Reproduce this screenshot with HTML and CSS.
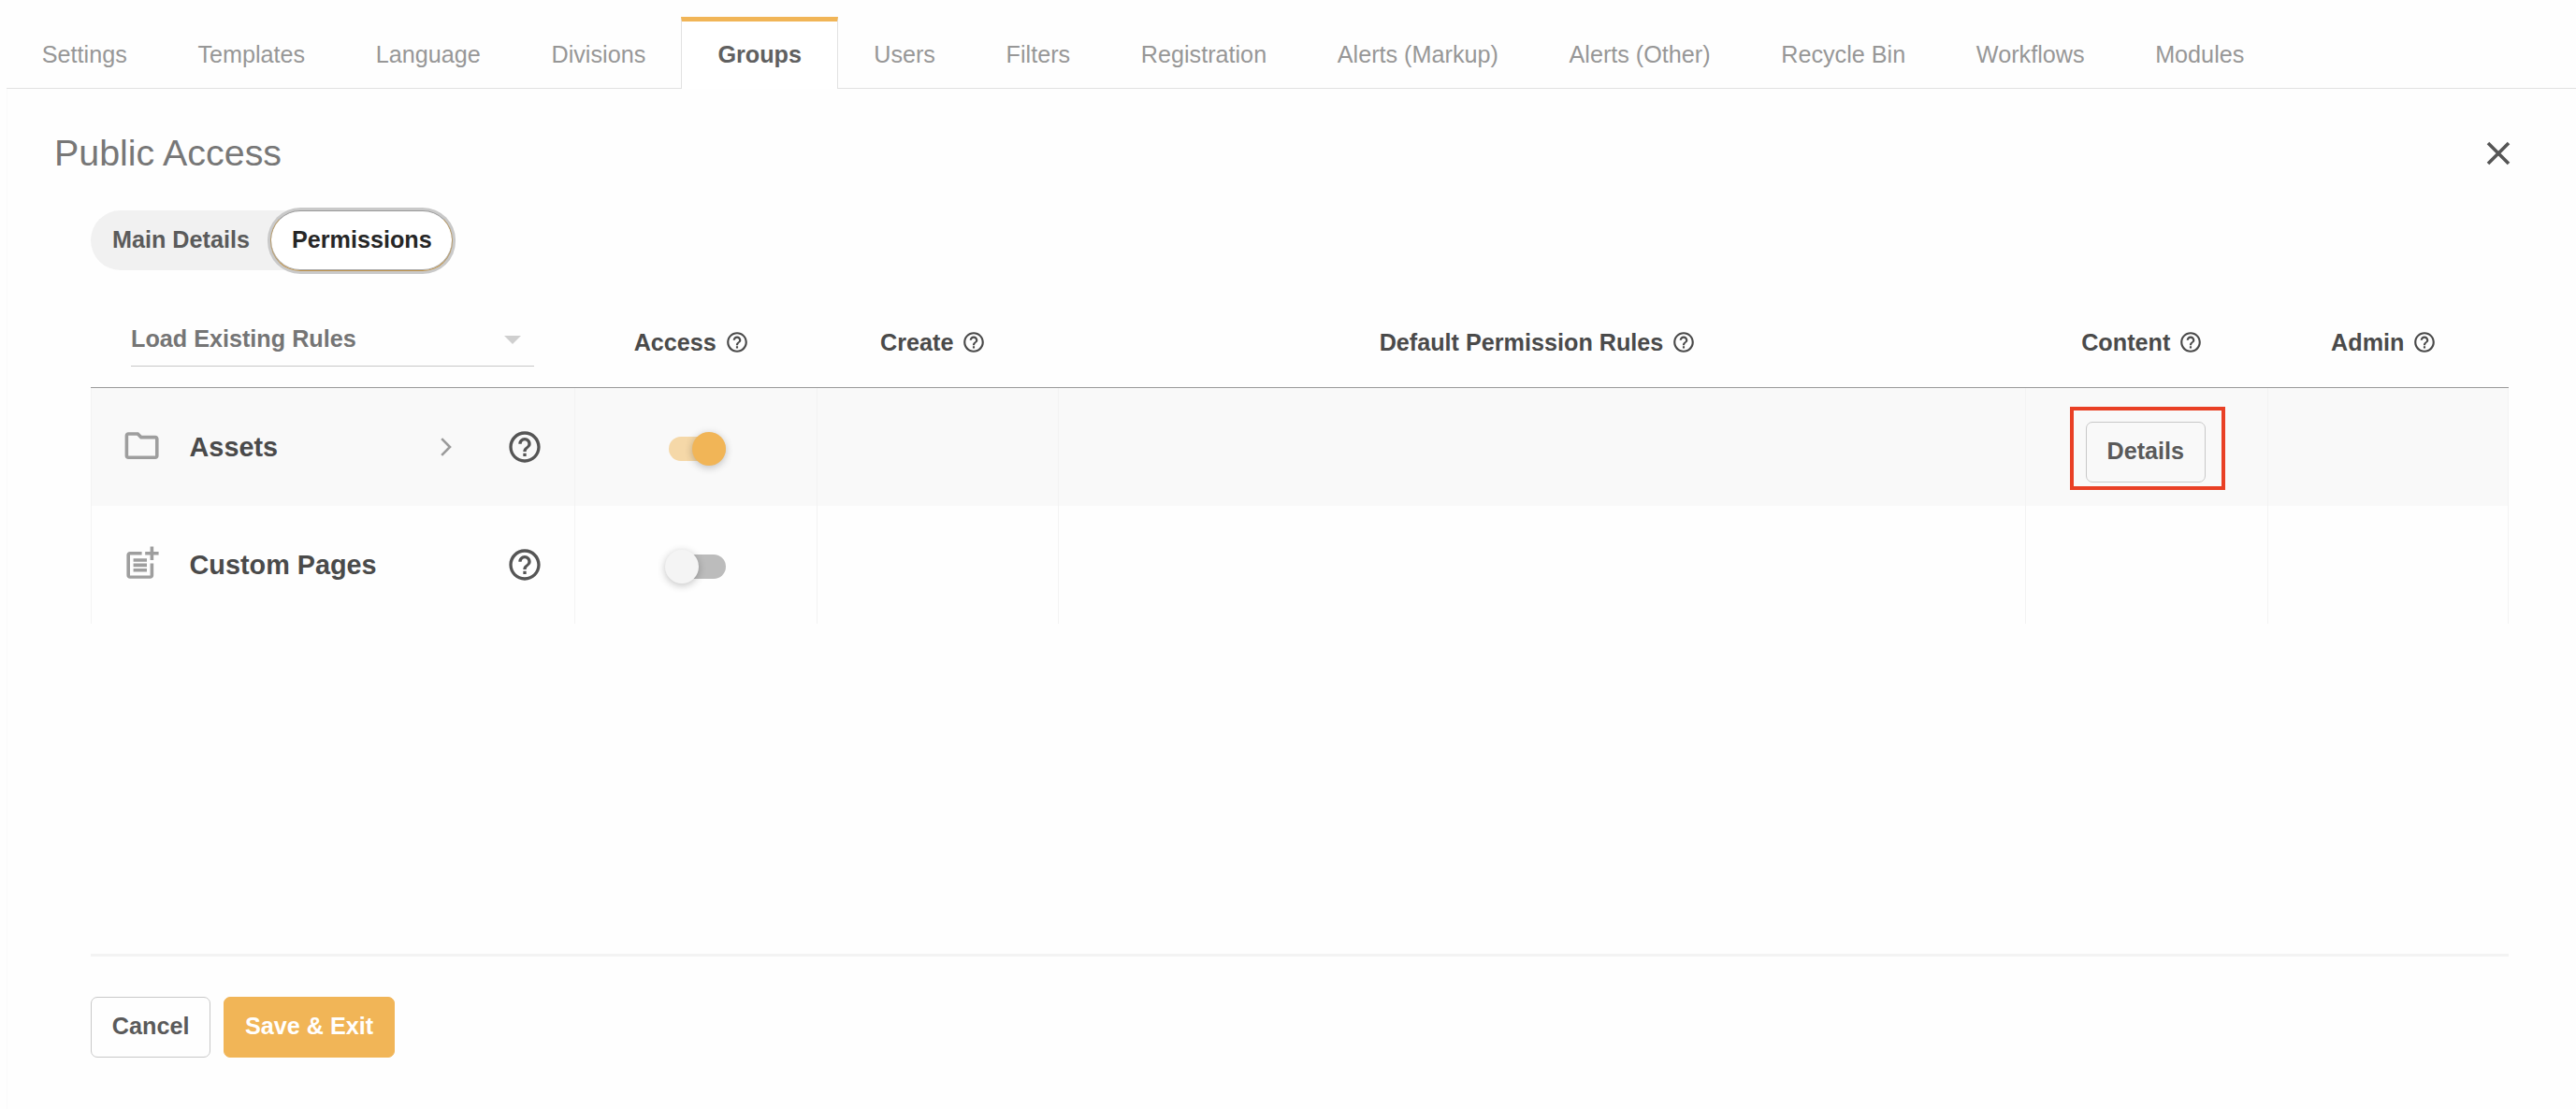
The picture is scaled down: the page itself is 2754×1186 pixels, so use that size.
FILE: index.html
```html
<!DOCTYPE html>
<html lang="en">
<head>
<meta charset="utf-8">
<title>Groups - Public Access</title>
<link rel="stylesheet" href="styles.css">
</head>
<body>
<svg class="defs" width="0" height="0" aria-hidden="true">
  <symbol id="help" viewBox="0 0 24 24"><path d="M11 18h2v-2h-2v2zm1-16C6.48 2 2 6.48 2 12s4.480 10 10 10 10-4.480 10-10S17.520 2 12 2zm0 18c-4.410 0-8-3.590-8-8s3.590-8 8-8 8 3.590 8 8-3.590 8-8 8zm0-14c-2.210 0-4 1.790-4 4h2c0-1.100.900-2 2-2s2 .900 2 2c0 2-3 1.750-3 5h2c0-2.250 3-2.500 3-5 0-2.210-1.790-4-4-4z"/></symbol>
</svg>
<nav class="tabs">
  <a class="tab">Settings</a>
  <a class="tab">Templates</a>
  <a class="tab">Language</a>
  <a class="tab">Divisions</a>
  <a class="tab active">Groups</a>
  <a class="tab">Users</a>
  <a class="tab">Filters</a>
  <a class="tab">Registration</a>
  <a class="tab">Alerts (Markup)</a>
  <a class="tab">Alerts (Other)</a>
  <a class="tab">Recycle Bin</a>
  <a class="tab">Workflows</a>
  <a class="tab">Modules</a>
</nav>
<main class="panel">
  <header class="panel-head">
    <h1>Public Access</h1>
    <svg class="close" viewBox="0 0 26 26"><path d="M2 2 24 24M24 2 2 24"/></svg>
  </header>
  <div class="content">
    <div class="segments">
      <button class="segment">Main Details</button>
      <button class="segment selected">Permissions</button>
    </div>
    <div class="row head">
      <div class="cell-select">
        <div class="select"><span>Load Existing Rules</span><i class="caret"></i></div>
      </div>
      <div class="label">Access<svg><use href="#help"/></svg></div>
      <div class="label">Create<svg><use href="#help"/></svg></div>
      <div class="label">Default Permission Rules<svg><use href="#help"/></svg></div>
      <div class="label">Content<svg><use href="#help"/></svg></div>
      <div class="label">Admin<svg><use href="#help"/></svg></div>
    </div>
    <div class="row shaded">
      <div class="cell name">
        <svg class="type" viewBox="0 0 24 24"><path d="M9.170 6l2 2H20v10H4V6h5.170M10 4H4c-1.100 0-1.990.900-1.990 2L2 18c0 1.100.900 2 2 2h16c1.100 0 2-.900 2-2V8c0-1.100-.900-2-2-2h-8l-2-2z"/></svg>
        <span>Assets</span>
        <svg class="chevron" viewBox="0 0 12 20"><path d="M1.200 1.200 10 10 1.200 18.800"/></svg>
        <svg class="help"><use href="#help"/></svg>
      </div>
      <div class="cell"><div class="switch on"><i></i></div></div>
      <div class="cell"></div>
      <div class="cell"></div>
      <div class="cell"><div class="detail-wrap"><button class="btn">Details</button></div></div>
      <div class="cell"></div>
    </div>
    <div class="row">
      <div class="cell name">
        <svg class="type" viewBox="0 0 24 24"><path d="M17 19.220H5V7h7V5H5c-1.100 0-2 .900-2 2v12c0 1.100.900 2 2 2h12c1.100 0 2-.900 2-2v-7h-2v7.220zM19 2h-2v3h-3v2h3v3h2V7h3V5h-3V2zM7 9h8v2H7zM7 12h8v2H7zM7 15h8v2H7z"/></svg>
        <span>Custom Pages</span>
        <svg class="help"><use href="#help"/></svg>
      </div>
      <div class="cell"><div class="switch"><i></i></div></div>
      <div class="cell"></div>
      <div class="cell"></div>
      <div class="cell"></div>
      <div class="cell"></div>
    </div>
  </div>
  <footer class="actions">
    <button class="btn">Cancel</button>
    <button class="btn primary">Save &amp; Exit</button>
  </footer>
</main>
</body>
</html>
```

FILE: styles.css
```css
* { box-sizing: border-box; }
body {
  margin: 0;
  height: 1186px;
  padding: 18px 0 0 7px;
  display: flex;
  flex-direction: column;
  overflow: hidden;
  background: #fefefe;
  color: #4a4a4a;
  font: 25.2px/30px "Liberation Sans", Arial, Helvetica, sans-serif;
}
button { font: inherit; color: inherit; margin: 0; }
.defs { position: absolute; }
svg { fill: currentColor; flex: none; }

.tabs {
  display: flex;
  height: 77px;
  box-shadow: inset 0 -1px #e2e2e2;
}
.tab {
  padding: 25px 36.8px 0;
  border: solid transparent;
  border-width: 0 1px;
  color: #979797;
  white-space: nowrap;
}
.tab.active {
  padding: 20px 38.4px 0;
  border-top: 5px solid #f1b557;
  border-left-color: #e2e2e2;
  border-right-color: #e2e2e2;
  background: #fff;
  color: #606060;
  font-weight: bold;
}

.panel {
  flex: 1;
  display: flex;
  flex-direction: column;
  border-left: 1px solid #fafafa;
}
.panel-head {
  display: flex;
  justify-content: space-between;
  align-items: center;
  height: 130px;
  padding: 7px 70px 0 50px;
}
h1 { margin: 0 0 2px; font-size: 39.4px; line-height: 48px; font-weight: normal; color: #777; }
.close { width: 26px; height: 26px; fill: none; stroke: #555; stroke-width: 3.6; }

.content {
  height: 798px;
  margin: 0 72px 0 89px;
  border-bottom: 3px solid #f3f3f3;
}
.segments {
  display: inline-flex;
  vertical-align: top;
  height: 64px;
  border-radius: 32px;
  background: #f1f1f1;
  font-weight: bold;
  color: #5b5b5b;
}
.segment { border: 0; background: none; padding: 0 22px 2px 23px; }
.segment.selected {
  border: 1px solid #b59a6c;
  border-top-color: #999;
  border-bottom-color: #c3954a;
  border-radius: 32px;
  padding: 0 21px 3px 22px;
  margin: 0 3px 0 0;
  height: 65px;
  background: #fff;
  color: #262626;
  box-shadow: 0 0 0 3px #c9c9c9, inset 0 -1px #a5a5a5;
}

.row {
  display: grid;
  grid-template-columns: 2fr 1fr 1fr 4fr 1fr 1fr;
  height: 126px;
}
.head { border-bottom: 1px solid #999; font-weight: bold; }
.cell-select { padding: 55px 43px 0; }
.select {
  display: flex;
  justify-content: space-between;
  height: 48px;
  padding: 3px 14px 0 0;
  border-bottom: 1px solid #c8c8c8;
  color: #757575;
}
.caret {
  width: 18px;
  height: 9px;
  margin-top: 12px;
  background: #cfcfcf;
  clip-path: polygon(0 0, 100% 0, 50% 100%);
}
.label {
  display: flex;
  justify-content: center;
  align-items: center;
  gap: 9px;
  padding: 29px 8px 0 0;
  white-space: nowrap;
}
.label svg { width: 26px; height: 26px; }

.cell {
  display: flex;
  align-items: center;
  justify-content: center;
  min-width: 0;
  border-left: 1px solid #f3f3f3;
}
.cell:last-child { border-right: 1px solid #f3f3f3; }
.shaded { background: #f9f9f9; }
.name {
  justify-content: flex-start;
  padding: 0 33.5px 0 32.4px;
  font-size: 28.8px;
  font-weight: bold;
}
.name span { flex: 1; margin-left: 29px; }
.type { width: 43.2px; height: 43.2px; margin-bottom: 3px; color: #9e9e9e; }
.chevron { width: 12px; height: 20px; margin-right: 58px; fill: none; stroke: #9b9b9b; stroke-width: 2.6; }
.help { width: 40px; height: 40px; color: #555; }

.switch {
  display: flex;
  align-items: center;
  width: 61px;
  height: 26px;
  margin: 4px 0 0 3px;
  border-radius: 13px;
  background: #bcbcbc;
}
.switch i {
  width: 36px;
  height: 36px;
  margin-left: -4px;
  border-radius: 50%;
  background: #f4f4f4;
  box-shadow: 0 2px 8px rgba(0, 0, 0, .24);
}
.switch.on { background: #f5d8a8; }
.switch.on i { margin-left: 25px; background: #f1b557; }

.btn {
  height: 65px;
  padding: 0 21.8px 4px;
  border: 1px solid #c8c8c8;
  border-radius: 7px;
  background: transparent;
  color: #5a5a5a;
  font-weight: bold;
}
.primary { border-color: #f1b557; background: #f1b557; color: #fff; }
.detail-wrap { position: relative; display: flex; margin: 11px 2px 0 0; }
.detail-wrap::after {
  content: "";
  position: absolute;
  inset: -16px -21px -8px -17px;
  border: 4px solid #e94025;
}
.actions { display: flex; gap: 14px; padding: 43px 89px 0; }
```
